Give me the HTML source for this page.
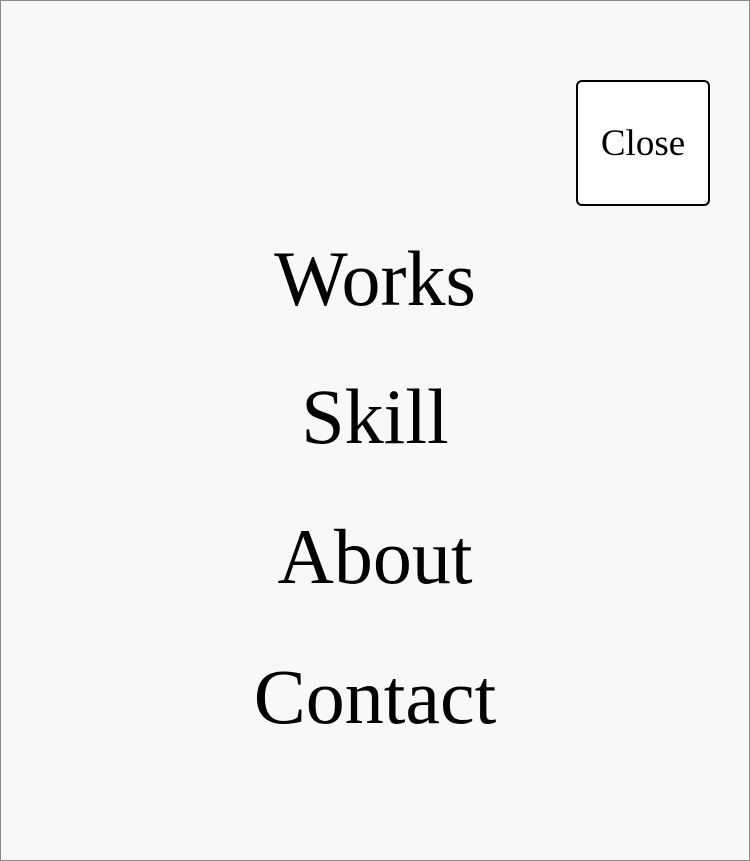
<!DOCTYPE html>
<html><head><meta charset="utf-8"><style>
html,body{margin:0;padding:0}
body{width:750px;height:861px;background:#f8f8f8;position:relative;overflow:hidden;font-family:"Liberation Serif","Noto Serif CJK JP",serif;color:#000}
.frame{position:absolute;left:0;top:0;width:748px;height:859px;border:1px solid #8a8a8a}
.btn{position:absolute;left:576px;top:80px;width:130px;height:122px;border:2px solid #000;border-radius:6px;background:#fff;font-size:37px;text-align:center;line-height:124px}
.item{position:absolute;left:0;width:750px;text-align:center;font-size:78px;line-height:140px}
</style></head><body>
<div class="frame"></div>
<div class="btn">Close</div>
<div class="item" style="top:209px">Works</div>
<div class="item" style="top:347px">Skill</div>
<div class="item" style="top:487px">About</div>
<div class="item" style="top:627px">Contact</div>
</body></html>
